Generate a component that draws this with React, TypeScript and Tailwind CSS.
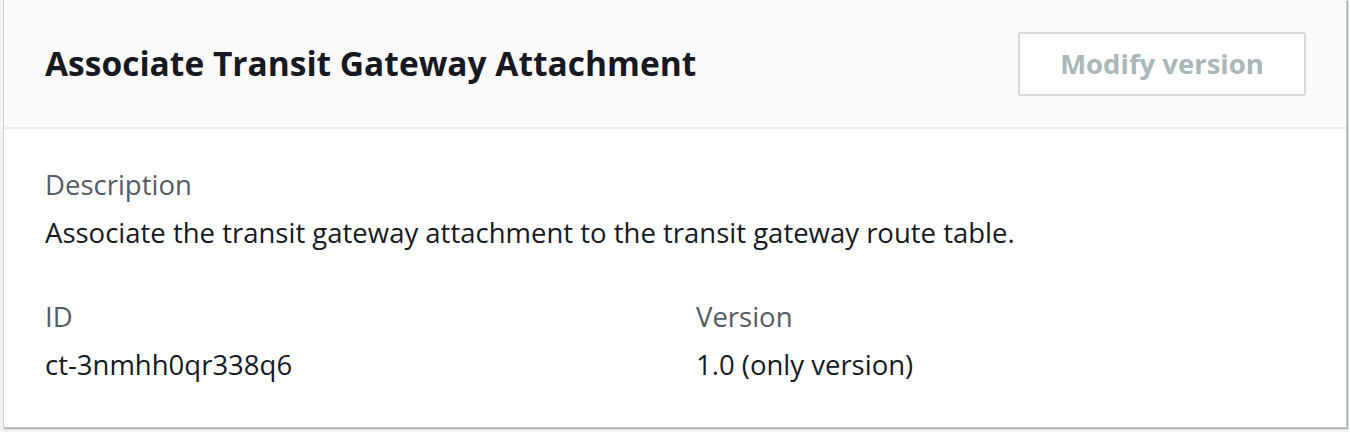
export default function App() {
  return (
    <div className="min-h-[432px] bg-[#f2f3f3] font-['Open_Sans',sans-serif]">
      <div className="ml-[3px] mr-[3px] border-x border-b border-[#c8cccc] bg-white shadow-[1px_1px_1px_0_rgba(0,28,36,0.3)]">
        <div className="flex h-[129px] items-center justify-between border-b-2 border-[#eaeded] bg-[#fafafa] pl-[41px] pr-[40px]">
          <h2 className="text-[33.5px] font-bold text-[#16191f]">Associate Transit Gateway Attachment</h2>
          <button className="h-[64px] w-[288px] rounded-[3px] border-2 border-[#d5dbdb] bg-white text-[27.5px] font-bold text-[#aab7b8]">
            Modify version
          </button>
        </div>
        <div className="pl-[41px] pr-[40px] pt-[38px] pb-[44px] text-[27.5px] leading-[36px]">
          <div className="text-[#545b64]">Description</div>
          <div className="mt-[12px] text-[#16191f]">
            Associate the transit gateway attachment to the transit gateway route table.
          </div>
          <div className="mt-[48px] grid grid-cols-[651px_1fr]">
            <div>
              <div className="text-[#545b64]">ID</div>
              <div className="mt-[12px] text-[#16191f]">ct-3nmhh0qr338q6</div>
            </div>
            <div>
              <div className="text-[#545b64]">Version</div>
              <div className="mt-[12px] text-[#16191f]">1.0 (only version)</div>
            </div>
          </div>
        </div>
      </div>
    </div>
  );
}
